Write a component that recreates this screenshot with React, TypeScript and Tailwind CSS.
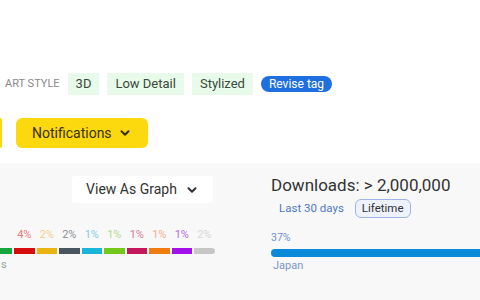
import { ChevronDown } from 'lucide-react';

const segments = [
  { w: 'w-[12px]', bar: 'bg-[#16a83e]', label: '', text: 'text-transparent' },
  { w: 'w-[20.5px]', bar: 'bg-[#d60d0d]', label: '4%', text: 'text-[#e57a7a]' },
  { w: 'w-[20.5px]', bar: 'bg-[#e9b312]', label: '2%', text: 'text-[#f1cf8a]' },
  { w: 'w-[20.5px]', bar: 'bg-[#4a565f]', label: '2%', text: 'text-[#8c9194]' },
  { w: 'w-[20.5px]', bar: 'bg-[#18b5d9]', label: '1%', text: 'text-[#86cde4]' },
  { w: 'w-[20.5px]', bar: 'bg-[#74c81c]', label: '1%', text: 'text-[#b2d991]' },
  { w: 'w-[20.5px]', bar: 'bg-[#c3185c]', label: '1%', text: 'text-[#d77aa0]' },
  { w: 'w-[20.5px]', bar: 'bg-[#f07c10]', label: '1%', text: 'text-[#f3ad85]' },
  { w: 'w-[20.5px]', bar: 'bg-[#a310e9]', label: '1%', text: 'text-[#b06ee6]' },
  { w: 'w-[20.5px]', bar: 'bg-[#c6c6c6]', label: '2%', text: 'text-[#d6d6d6]' },
];

export default function App() {
  return (
    <div className="w-[480px] h-[300px] overflow-hidden bg-white font-['Roboto',sans-serif]">
      {/* Art style */}
      <div className="flex items-center gap-2 pl-[5px] pt-[73px] h-[95px]">
        <span className="text-[11px] uppercase text-[#8a8a8a]">Art Style</span>
        <span className="h-[22px] px-[8px] flex items-center bg-[#e8fbea] text-[13px] text-[#3a4a3c]">3D</span>
        <span className="h-[22px] px-[8px] flex items-center bg-[#e8fbea] text-[13px] text-[#3a4a3c]">Low Detail</span>
        <span className="h-[22px] px-[8px] flex items-center bg-[#e8fbea] text-[13px] text-[#3a4a3c]">Stylized</span>
        <span className="h-[16px] px-[8px] flex items-center rounded-full bg-[#1f6fe0] text-[12px] text-white">Revise tag</span>
      </div>

      {/* Actions */}
      <div className="flex items-center gap-[14px] mt-[23px] h-[30px]">
        <span className="w-[2px] h-[30px] bg-[#fcd90e] rounded-r" />
        <button className="h-[30px] px-[16px] flex items-center gap-[6px] rounded-[6px] bg-[#fcd90e] text-[14px] text-[#3a3100]">
          Notifications
          <ChevronDown className="w-[14px] h-[14px]" strokeWidth={3.5} />
        </button>
      </div>

      {/* Stats */}
      <div className="flex mt-[15px] h-[137px] bg-[#f8f8f8]">
        <div className="w-[271px] shrink-0 flex flex-col">
          <div className="ml-[72px] mt-[13px] w-[141px] h-[27px] bg-white rounded-[3px] flex items-center justify-center gap-[8px] text-[14px] text-[#333]">
            View As Graph
            <ChevronDown className="w-[14px] h-[14px]" strokeWidth={3.5} />
          </div>
          <div className="flex gap-[2px] mt-[26px]">
            {segments.map((s, i) => (
              <div key={i} className={`${s.w} flex flex-col items-center`}>
                <span className={`h-[12px] text-[11px] leading-[12px] ${s.text}`}>{s.label}</span>
                <span className={`mt-[7px] w-full h-[6px] ${s.bar} ${i === segments.length - 1 ? 'rounded-r-full' : ''}`} />
              </div>
            ))}
          </div>
          <span className="mt-[5px] ml-[1px] text-[11px] leading-[12px] text-[#8aa894]">s</span>
        </div>

        <div className="flex-1 flex flex-col">
          <div className="mt-[11px] text-[17px] leading-[22px] text-[#333] whitespace-nowrap">Downloads: &gt; 2,000,000</div>
          <div className="flex items-center mt-[3px] ml-[8px] gap-[11px]">
            <span className="text-[11.5px] text-[#4f78c8]">Last 30 days</span>
            <span className="h-[19px] px-[6px] flex items-center rounded-[6px] border border-[#9fb3e6] bg-[#eef2fc] text-[11.5px] text-[#333]">Lifetime</span>
          </div>
          <span className="mt-[14px] text-[10.5px] leading-[12px] text-[#6d93d0]">37%</span>
          <span className="mt-[5px] w-[260px] h-[8px] rounded-full bg-[#0a89d8]" />
          <span className="mt-[3px] ml-[2px] text-[11px] leading-[12px] text-[#7a96c8]">Japan</span>
        </div>
      </div>
    </div>
  );
}
